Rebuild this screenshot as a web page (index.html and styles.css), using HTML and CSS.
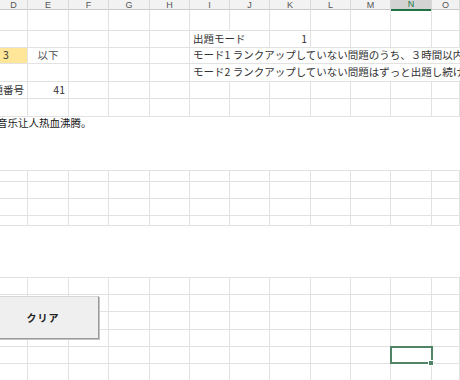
FILE: index.html
```html
<!DOCTYPE html>
<html>
<head>
    <title>出題シート</title>
    <link rel="stylesheet" href="styles.css">
</head>
<body>
    <div class="sheet">
        <div class="row header">
            <div class="c">D</div><div class="c">E</div><div class="c">F</div><div class="c">G</div>
            <div class="c">H</div><div class="c">I</div><div class="c">J</div><div class="c">K</div>
            <div class="c">L</div><div class="c">M</div><div class="c active">N</div><div class="c">O</div>
        </div>

        <div class="block">
            <div class="row h21">
                <div class="c"></div><div class="c"></div><div class="c"></div><div class="c"></div>
                <div class="c"></div><div class="c"></div><div class="c"></div><div class="c"></div>
                <div class="c"></div><div class="c"></div><div class="c"></div><div class="c"></div>
            </div>
            <div class="row h17">
                <div class="c"></div><div class="c"></div><div class="c"></div><div class="c"></div>
                <div class="c"></div><div class="c span2">出題モード</div><div class="c num">1</div>
                <div class="c"></div><div class="c"></div><div class="c"></div><div class="c"></div>
            </div>
            <div class="row h16">
                <div class="c input">3</div><div class="c center">以下</div><div class="c"></div><div class="c"></div>
                <div class="c"></div><div class="c span7">モード1 ランクアップしていない問題のうち、３時間以内に出題した問題は出題しない</div>
            </div>
            <div class="row h18">
                <div class="c"></div><div class="c"></div><div class="c"></div><div class="c"></div>
                <div class="c"></div><div class="c span7">モード2 ランクアップしていない問題はずっと出題し続けます</div>
            </div>
            <div class="row h17">
                <div class="c num">問題番号</div><div class="c num">41</div><div class="c"></div><div class="c"></div>
                <div class="c"></div><div class="c"></div><div class="c"></div><div class="c"></div>
                <div class="c"></div><div class="c"></div><div class="c"></div><div class="c"></div>
            </div>
            <div class="row h18">
                <div class="c"></div><div class="c"></div><div class="c"></div><div class="c"></div>
                <div class="c"></div><div class="c"></div><div class="c"></div><div class="c"></div>
                <div class="c"></div><div class="c"></div><div class="c"></div><div class="c"></div>
            </div>
        </div>

        <div class="band band-text">
            <p class="note">音乐让人热血沸腾。</p>
        </div>

        <div class="block lined">
            <div class="row h11">
                <div class="c"></div><div class="c"></div><div class="c"></div><div class="c"></div>
                <div class="c"></div><div class="c"></div><div class="c"></div><div class="c"></div>
                <div class="c"></div><div class="c"></div><div class="c"></div><div class="c"></div>
            </div>
            <div class="row h17">
                <div class="c"></div><div class="c"></div><div class="c"></div><div class="c"></div>
                <div class="c"></div><div class="c"></div><div class="c"></div><div class="c"></div>
                <div class="c"></div><div class="c"></div><div class="c"></div><div class="c"></div>
            </div>
            <div class="row h17">
                <div class="c"></div><div class="c"></div><div class="c"></div><div class="c"></div>
                <div class="c"></div><div class="c"></div><div class="c"></div><div class="c"></div>
                <div class="c"></div><div class="c"></div><div class="c"></div><div class="c"></div>
            </div>
            <div class="row h10">
                <div class="c"></div><div class="c"></div><div class="c"></div><div class="c"></div>
                <div class="c"></div><div class="c"></div><div class="c"></div><div class="c"></div>
                <div class="c"></div><div class="c"></div><div class="c"></div><div class="c"></div>
            </div>
        </div>

        <div class="band band-empty"></div>

        <div class="block lined">
            <div class="row h17">
                <div class="c"></div><div class="c"></div><div class="c"></div><div class="c"></div>
                <div class="c"></div><div class="c"></div><div class="c"></div><div class="c"></div>
                <div class="c"></div><div class="c"></div><div class="c"></div><div class="c"></div>
            </div>
            <div class="row h17">
                <div class="c"></div><div class="c"></div><div class="c"></div><div class="c"></div>
                <div class="c"></div><div class="c"></div><div class="c"></div><div class="c"></div>
                <div class="c"></div><div class="c"></div><div class="c"></div><div class="c"></div>
            </div>
            <div class="row h18">
                <div class="c"></div><div class="c"></div><div class="c"></div><div class="c"></div>
                <div class="c"></div><div class="c"></div><div class="c"></div><div class="c"></div>
                <div class="c"></div><div class="c"></div><div class="c"></div><div class="c"></div>
            </div>
            <div class="row h17">
                <div class="c"></div><div class="c"></div><div class="c"></div><div class="c"></div>
                <div class="c"></div><div class="c"></div><div class="c"></div><div class="c"></div>
                <div class="c"></div><div class="c"></div><div class="c"></div><div class="c"></div>
            </div>
            <div class="row h17">
                <div class="c"></div><div class="c"></div><div class="c"></div><div class="c"></div>
                <div class="c"></div><div class="c"></div><div class="c"></div><div class="c"></div>
                <div class="c"></div><div class="c"></div><div class="c selected"></div><div class="c"></div>
            </div>
            <div class="row h17">
                <div class="c"></div><div class="c"></div><div class="c"></div><div class="c"></div>
                <div class="c"></div><div class="c"></div><div class="c"></div><div class="c"></div>
                <div class="c"></div><div class="c"></div><div class="c"></div><div class="c"></div>
            </div>
        </div>

        <button class="clear-btn">クリア</button>
    </div>
</body>
</html>
```

FILE: styles.css
```css
body {
    margin: 0;
    width: 460px;
    height: 380px;
    overflow: hidden;
    background: white;
    font-family: "Noto Sans CJK JP", "Noto Sans", sans-serif;
    font-size: 10.5px;
    color: #333;
}

.sheet {
    position: relative;
    width: 460px;
}

.row {
    display: grid;
    grid-template-columns: 28px 41px 40px 41px 40px 40px 40px 41px 40px 40px 41px 28px;
    border-bottom: 1px solid #e2e2e2;
    box-sizing: border-box;
}

.c {
    border-right: 1px solid #e2e2e2;
    display: flex;
    align-items: center;
    padding: 0 3px;
    white-space: nowrap;
    min-width: 0;
    line-height: 1;
}

.h10 { height: 10px; }
.h11 { height: 11px; }
.h16 { height: 16px; }
.h17 { height: 17px; }
.h18 { height: 18px; }
.h21 { height: 21px; }

/* column header */
.header {
    height: 10px;
    background: #f2f2f2;
    border-bottom: 1px solid #c9c9c9;
}

.header .c {
    justify-content: center;
    align-items: center;
    font-family: "Liberation Sans", Arial, sans-serif;
    font-size: 9px;
    line-height: 9px;
    color: #555;
    border-right-color: #d8d8d8;
}

.header .c.active {
    background: #d3d3d3;
    color: #217346;
    border-bottom: 2px solid #217346;
}

.span2 {
    grid-column: span 2;
}

.span7 {
    grid-column: span 7;
    overflow: hidden;
    border-right: none;
}

.num {
    justify-content: flex-end;
}

.center {
    justify-content: center;
    color: #555;
}

.input {
    background: #ffe699;
}

.lined {
    border-top: 1px solid #e2e2e2;
}

.band {
    background: white;
}

.band-text {
    height: 53px;
}

.band-empty {
    height: 51px;
}

.note {
    margin: 0 0 0 -3px;
    font-family: "Noto Sans CJK SC", sans-serif;
    font-size: 10.5px;
    line-height: 12px;
    color: #1a1a1a;
}

.selected {
    position: relative;
    outline: 2px solid #4f8566;
    outline-offset: -1px;
}

.selected::after {
    content: "";
    position: absolute;
    right: -3px;
    bottom: -3px;
    width: 4px;
    height: 4px;
    background: #4f8566;
    border: 1px solid white;
}

.clear-btn {
    position: absolute;
    left: -13px;
    top: 296px;
    width: 112px;
    height: 43px;
    background: #efefef;
    border: 1px solid #d6d6d6;
    border-right-color: #9a9a9a;
    border-bottom-color: #9a9a9a;
    box-shadow: 1px 1px 0 #c4c4c4;
    font-family: "Noto Sans CJK JP", sans-serif;
    font-size: 10px;
    font-weight: bold;
    color: #222;
    letter-spacing: 1px;
    padding: 0;
}
```
